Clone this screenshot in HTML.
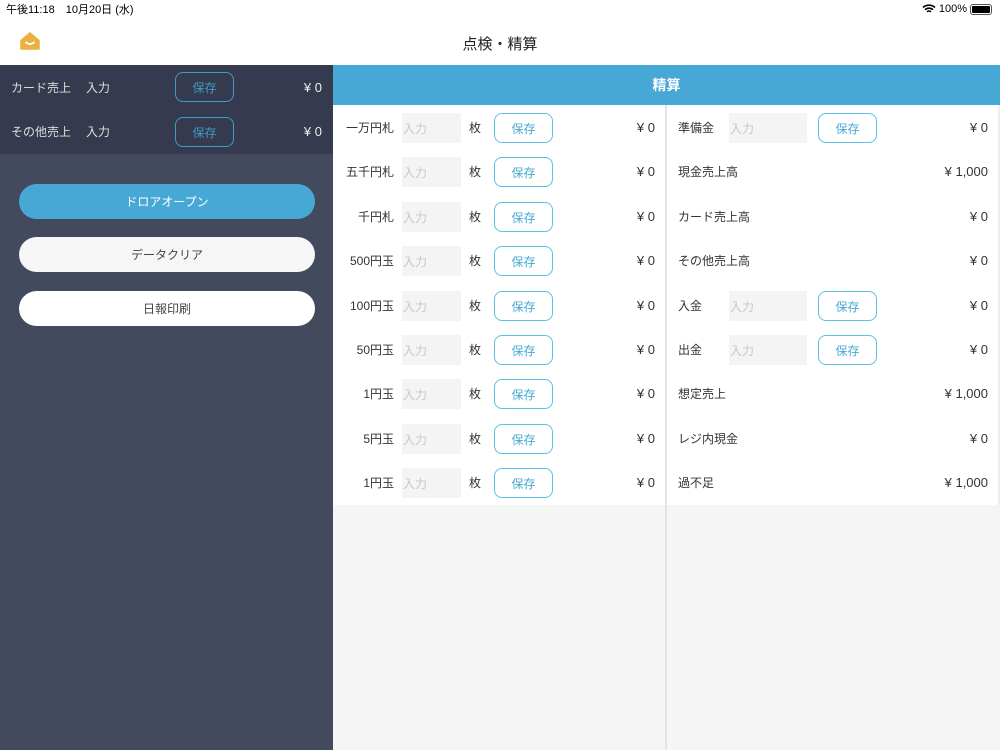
<!DOCTYPE html>
<html><head><meta charset="utf-8"><style>
*{margin:0;padding:0;box-sizing:border-box}
body{width:1000px;height:750px;overflow:hidden;background:#fff;font-family:"Liberation Sans","Noto Sans CJK JP",sans-serif;position:relative;color:#333}
.a{position:absolute}
.t{font-size:12px;line-height:16px}
.btn,.sbtn{position:absolute;width:59px;height:30px;border-radius:8px;font-size:12px;display:flex;align-items:center;justify-content:center;padding-top:1px}
.btn{border:1.5px solid #5cc0e6;color:#48a8d5;background:#fff}
.sbtn{border:1.5px solid #3d9cc8;color:#3d9cc8}
.inp{position:absolute;background:#f4f4f4;height:30px;color:#c8c8c8;font-size:12px;display:flex;align-items:center;padding:1px 0 0 1px}
.pill{position:absolute;left:19px;width:296px;height:35px;border-radius:18px;font-size:12px;display:flex;align-items:center;justify-content:center}
.y{font-size:13px}
</style></head><body>
<div class="a t" style="left:6px;top:2px;font-size:11px;color:#000">午後11:18　10月20日 (水)</div>
<div class="a" style="right:8px;top:3px;font-size:11px;color:#000;display:flex;align-items:center;gap:3px">
<svg width="14" height="10" viewBox="0 0 14 10"><path d="M1 3.5a9 9 0 0 1 12 0M3 5.7a6 6 0 0 1 8 0M5 7.8a3 3 0 0 1 4 0" stroke="#000" stroke-width="1.6" fill="none"/></svg>
<span>100%</span>
<span style="display:inline-block;width:22px;height:11px;border:1px solid #555;border-radius:3px;padding:1px"><span style="display:block;width:100%;height:100%;background:#000;border-radius:1px"></span></span>
</div>
<svg class="a" style="left:19px;top:31px" width="22" height="20" viewBox="0 0 22 20"><path d="M11 2L20 9.5V18H2V9.5Z" fill="#eab042" stroke="#eab042" stroke-width="1.5" stroke-linejoin="round"/><path d="M7 11.5q4 3 8 0" stroke="#fff" stroke-width="1.8" fill="none" stroke-linecap="round"/></svg>
<div class="a" style="left:0;width:1000px;top:33px;text-align:center;font-size:15px;color:#222">点検・精算</div>

<div class="a" style="left:0;top:65px;width:333px;height:89px;background:#363a4e"></div>
<div class="a" style="left:0;top:154px;width:333px;height:596px;background:#434a5e"></div>
<div class="a t" style="left:11px;top:80px;color:#ddd">カード売上</div>
<div class="a t" style="left:86px;top:80px;color:#ddd">入力</div>
<div class="sbtn" style="left:175px;top:72px">保存</div>
<div class="a t y" style="right:11px;left:auto;top:80px;color:#eee;width:auto;right:678px">¥ 0</div>
<div class="a t" style="left:11px;top:124px;color:#ddd">その他売上</div>
<div class="a t" style="left:86px;top:124px;color:#ddd">入力</div>
<div class="sbtn" style="left:175px;top:117px">保存</div>
<div class="a t y" style="right:678px;top:124px;color:#eee">¥ 0</div>
<div class="pill" style="top:184px;background:#48a8d5;color:#fff">ドロアオープン</div>
<div class="pill" style="top:237px;background:#f6f6f6;color:#444">データクリア</div>
<div class="pill" style="top:291px;background:#fff;color:#444">日報印刷</div>

<div class="a" style="left:333px;top:65px;width:667px;height:40px;background:#48a8d5;color:#fff;text-align:center;line-height:40px;font-size:14px;font-weight:bold">精算</div>
<div class="a" style="left:333px;top:505px;width:667px;height:245px;background:#f5f5f5"></div>
<div class="a" style="left:665px;top:105px;width:2px;height:645px;background:#e4e4e4"></div>
<div class="a" style="left:998px;top:105px;width:2px;height:400px;background:#eee"></div>

<div id="L"></div>
<script>
var L=["一万円札","五千円札","千円札","500円玉","100円玉","50円玉","1円玉","5円玉","1円玉"];
var R=[["準備金",1,"¥ 0"],["現金売上高",0,"¥ 1,000"],["カード売上高",0,"¥ 0"],["その他売上高",0,"¥ 0"],["入金",1,"¥ 0"],["出金",1,"¥ 0"],["想定売上",0,"¥ 1,000"],["レジ内現金",0,"¥ 0"],["過不足",0,"¥ 1,000"]];
var h="";
for(var i=0;i<9;i++){var c=128+i*44.4;var t=c-8,b=c-15;
h+='<div class="a t" style="right:606px;top:'+t+'px">'+L[i]+'</div>';
h+='<div class="inp" style="left:402px;width:59px;top:'+b+'px">入力</div>';
h+='<div class="a t" style="left:469px;top:'+t+'px">枚</div>';
h+='<div class="btn" style="left:494px;top:'+b+'px">保存</div>';
h+='<div class="a t y" style="right:345px;top:'+t+'px">¥ 0</div>';
h+='<div class="a t" style="left:678px;top:'+t+'px">'+R[i][0]+'</div>';
if(R[i][1]){h+='<div class="inp" style="left:729px;width:78px;top:'+b+'px">入力</div><div class="btn" style="left:818px;top:'+b+'px">保存</div>';}
h+='<div class="a t y" style="right:12px;top:'+t+'px">'+R[i][2]+'</div>';}
document.getElementById("L").innerHTML=h;
</script>
</body></html>
